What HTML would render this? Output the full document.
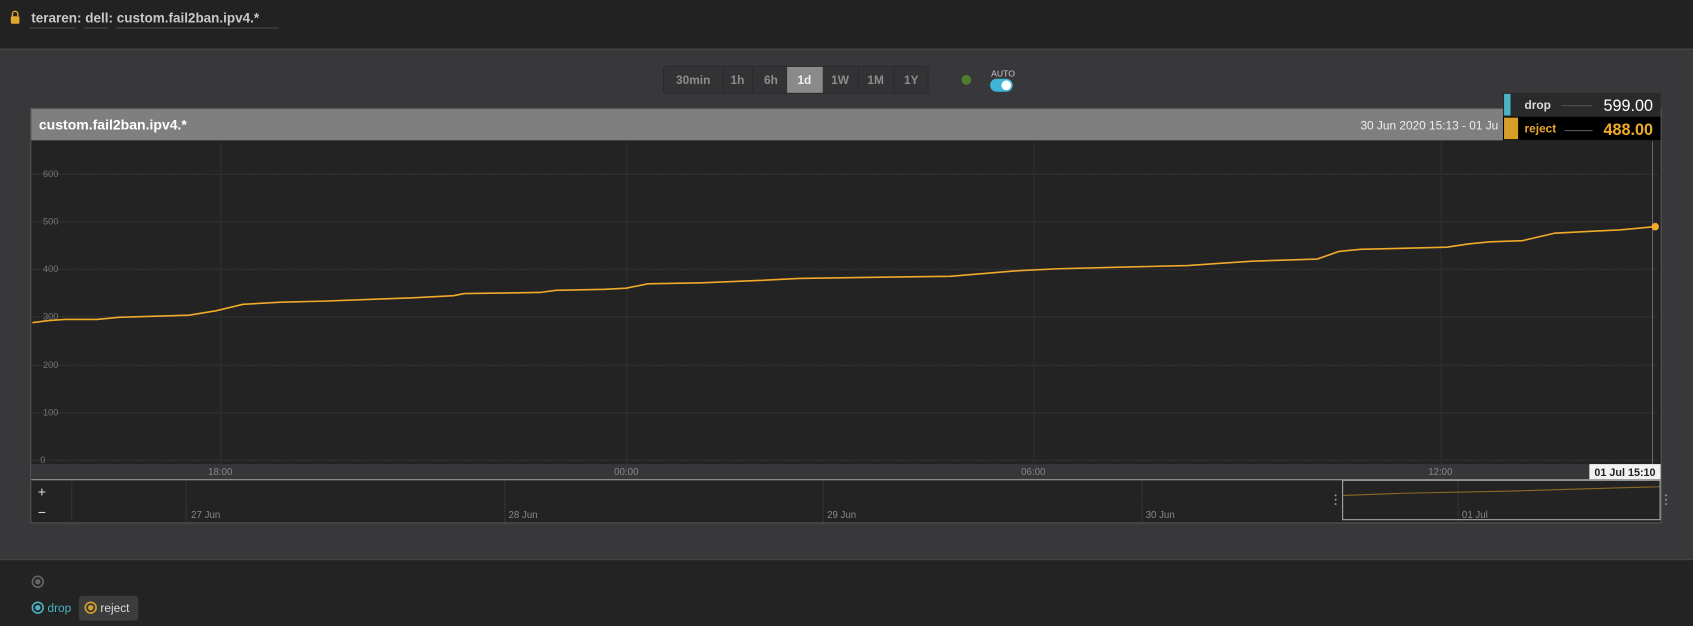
<!DOCTYPE html>
<html><head><meta charset="utf-8"><style>
html,body{margin:0;padding:0;background:#38383b;width:1693px;height:626px;overflow:hidden}
svg{display:block}
text{font-family:"Liberation Sans",sans-serif}
</style></head><body>
<svg width="1693" height="626" viewBox="0 0 1568 580" preserveAspectRatio="none" xmlns="http://www.w3.org/2000/svg">
<rect x="0" y="0" width="1568" height="580" fill="#38383b"/>
<rect x="0" y="0" width="1568" height="45" fill="#222222"/>
<line x1="0" y1="45.5" x2="1568" y2="45.5" stroke="#4a4a4a"/>
<rect x="0" y="519" width="1568" height="61" fill="#232323"/>
<line x1="0" y1="518.5" x2="1568" y2="518.5" stroke="#454545"/>
<rect x="10" y="15" width="8" height="7" rx="1" fill="#e0a82e"/>
<path d="M11.5 15 v-2 a2.5 2.5 0 0 1 5 0 v2" fill="none" stroke="#e0a82e" stroke-width="1.3"/>
<text x="29" y="21" font-size="12.5" font-weight="bold" fill="#c8c8c8">teraren: dell: custom.fail2ban.ipv4.*</text>
<line x1="27" y1="26" x2="70" y2="26" stroke="#666" stroke-width="0.6"/>
<line x1="78" y1="26" x2="100" y2="26" stroke="#666" stroke-width="0.6"/>
<line x1="107" y1="26" x2="258" y2="26" stroke="#666" stroke-width="0.6"/>
<rect x="614.5" y="61.5" width="245" height="25" rx="2" fill="#333336" stroke="#2b2b2d"/>
<rect x="729" y="62" width="33" height="24" fill="#8a8a8a"/>
<g stroke="#2b2b2d"><line x1="670" y1="62" x2="670" y2="86"/><line x1="697" y1="62" x2="697" y2="86"/><line x1="795" y1="62" x2="795" y2="86"/><line x1="828" y1="62" x2="828" y2="86"/></g>
<g font-size="11" font-weight="bold" fill="#8d8d8d" text-anchor="middle">
<text x="642" y="78">30min</text><text x="683" y="78">1h</text><text x="714" y="78">6h</text>
<text x="745" y="78" fill="#f0f0f0">1d</text><text x="778" y="78">1W</text><text x="811" y="78">1M</text><text x="844" y="78">1Y</text></g>
<circle cx="895" cy="74" r="4.5" fill="#4f7f2c"/>
<text x="929" y="71" font-size="8" fill="#ccc" text-anchor="middle">AUTO</text>
<rect x="917" y="73" width="21" height="12" rx="6" fill="#3fb4d8"/>
<circle cx="932" cy="79" r="4.5" fill="#fff"/>
<rect x="28.5" y="100.5" width="1510" height="384" fill="#232323" stroke="#555"/>
<rect x="29" y="101" width="1509" height="29" fill="#7f7f7f"/>
<text x="36" y="120" font-size="13" font-weight="bold" fill="#fff">custom.fail2ban.ipv4.*</text>
<text x="1260" y="120" font-size="11" fill="#eee">30 Jun 2020 15:13 - 01 Ju</text>
<g stroke="#3e3e3e" stroke-dasharray="1 1">
<line x1="30" y1="161.5" x2="1536" y2="161.5"/><line x1="30" y1="205.5" x2="1536" y2="205.5"/><line x1="30" y1="249.5" x2="1536" y2="249.5"/><line x1="30" y1="293.5" x2="1536" y2="293.5"/><line x1="30" y1="338.5" x2="1536" y2="338.5"/><line x1="30" y1="382.5" x2="1536" y2="382.5"/><line x1="30" y1="426.5" x2="1536" y2="426.5"/>
</g>
<g stroke="#2f2f2f"><line x1="204.5" y1="131" x2="204.5" y2="430"/><line x1="580.5" y1="131" x2="580.5" y2="430"/><line x1="957.5" y1="131" x2="957.5" y2="430"/><line x1="1334.5" y1="131" x2="1334.5" y2="430"/></g>
<line x1="1530.5" y1="131" x2="1530.5" y2="430" stroke="#666"/>
<g font-size="8.5" fill="#777" text-anchor="end"><text x="54" y="164">600</text><text x="54" y="208">500</text><text x="54" y="252">400</text><text x="54" y="296">300</text><text x="54" y="341">200</text><text x="54" y="385">100</text><text x="42" y="429">0</text></g>
<rect x="29" y="430" width="1509" height="14" fill="#37373a"/>
<g font-size="9" fill="#888" text-anchor="middle"><text x="204" y="440">18:00</text><text x="580" y="440">00:00</text><text x="957" y="440">06:00</text><text x="1334" y="440">12:00</text></g>
<rect x="1472" y="430" width="66" height="14" fill="#f2f2f2"/>
<text x="1505" y="441" font-size="10" font-weight="bold" fill="#222" text-anchor="middle">01 Jul 15:10</text>
<line x1="29" y1="444.5" x2="1538" y2="444.5" stroke="#aaa"/>
<polyline fill="none" stroke="#f0ab2a" stroke-width="1.5" points="30,299 45,297 60,296 90,296 110,294 175,292 200,288 225,282 260,280 300,279 380,276 420,274 430,272 500,271 515,269 560,268 580,267 600,263 650,262 700,260 740,258 800,257 880,256 940,251 980,249 1100,246 1130,244 1160,242 1220,240 1240,233 1260,231 1340,229 1360,226 1380,224 1410,223 1440,216 1480,214 1500,213 1533,210"/>
<circle cx="1533" cy="210" r="3.5" fill="#f0ab2a"/>
<line x1="66.5" y1="445" x2="66.5" y2="484" stroke="#333"/>
<text x="35" y="460" font-size="13" fill="#ddd">+</text>
<text x="35" y="479" font-size="13" fill="#ddd">−</text>
<g stroke="#444" stroke-dasharray="1 1"><line x1="172.5" y1="445" x2="172.5" y2="484"/><line x1="467.5" y1="445" x2="467.5" y2="484"/><line x1="762.5" y1="445" x2="762.5" y2="484"/><line x1="1057.5" y1="445" x2="1057.5" y2="484"/><line x1="1350.5" y1="445" x2="1350.5" y2="484"/></g>
<g font-size="9" fill="#888"><text x="177" y="480">27 Jun</text><text x="471" y="480">28 Jun</text><text x="766" y="480">29 Jun</text><text x="1061" y="480">30 Jun</text><text x="1354" y="480">01 Jul</text></g>
<rect x="1243.5" y="445" width="294" height="36.5" fill="none" stroke="#aaa"/>
<polyline fill="none" stroke="#8a6a25" stroke-width="1" points="1244,459 1300,457 1400,455 1500,452 1537,451"/>
<g fill="#999"><circle cx="1237" cy="459" r="0.9"/><circle cx="1237" cy="463" r="0.9"/><circle cx="1237" cy="467" r="0.9"/><circle cx="1543" cy="459" r="0.9"/><circle cx="1543" cy="463" r="0.9"/><circle cx="1543" cy="467" r="0.9"/></g>
<rect x="1392" y="86" width="146" height="22" fill="#2a2a2a"/>
<rect x="1392" y="108" width="146" height="22" fill="#000"/>
<rect x="1393" y="87" width="6" height="20" fill="#4ab3c4"/>
<rect x="1393" y="109" width="13" height="20" fill="#d89e2a"/>
<text x="1412" y="101" font-size="11" font-weight="bold" fill="#ddd">drop</text>
<line x1="1446" y1="98" x2="1475" y2="98" stroke="#555"/>
<text x="1531" y="103" font-size="15" fill="#fff" text-anchor="end">599.00</text>
<text x="1412" y="123" font-size="11" font-weight="bold" fill="#e8a830">reject</text>
<line x1="1449" y1="121" x2="1475" y2="121" stroke="#555"/>
<text x="1531" y="125" font-size="15" font-weight="bold" fill="#f0ab2a" text-anchor="end">488.00</text>
<circle cx="35" cy="539" r="5" fill="none" stroke="#666" stroke-width="1.5"/><circle cx="35" cy="539" r="2.5" fill="#666"/>
<circle cx="35" cy="563" r="5" fill="none" stroke="#4ab3c4" stroke-width="1.5"/><circle cx="35" cy="563" r="2.5" fill="#4ab3c4"/>
<text x="44" y="567" font-size="11" fill="#4ab3c4">drop</text>
<rect x="73" y="552" width="55" height="23" rx="3" fill="#3c3c3c"/>
<circle cx="84" cy="563" r="5" fill="none" stroke="#d89e2a" stroke-width="1.5"/><circle cx="84" cy="563" r="2.5" fill="#d89e2a"/>
<text x="93" y="567" font-size="11" fill="#ddd">reject</text>
</svg>
</body></html>
